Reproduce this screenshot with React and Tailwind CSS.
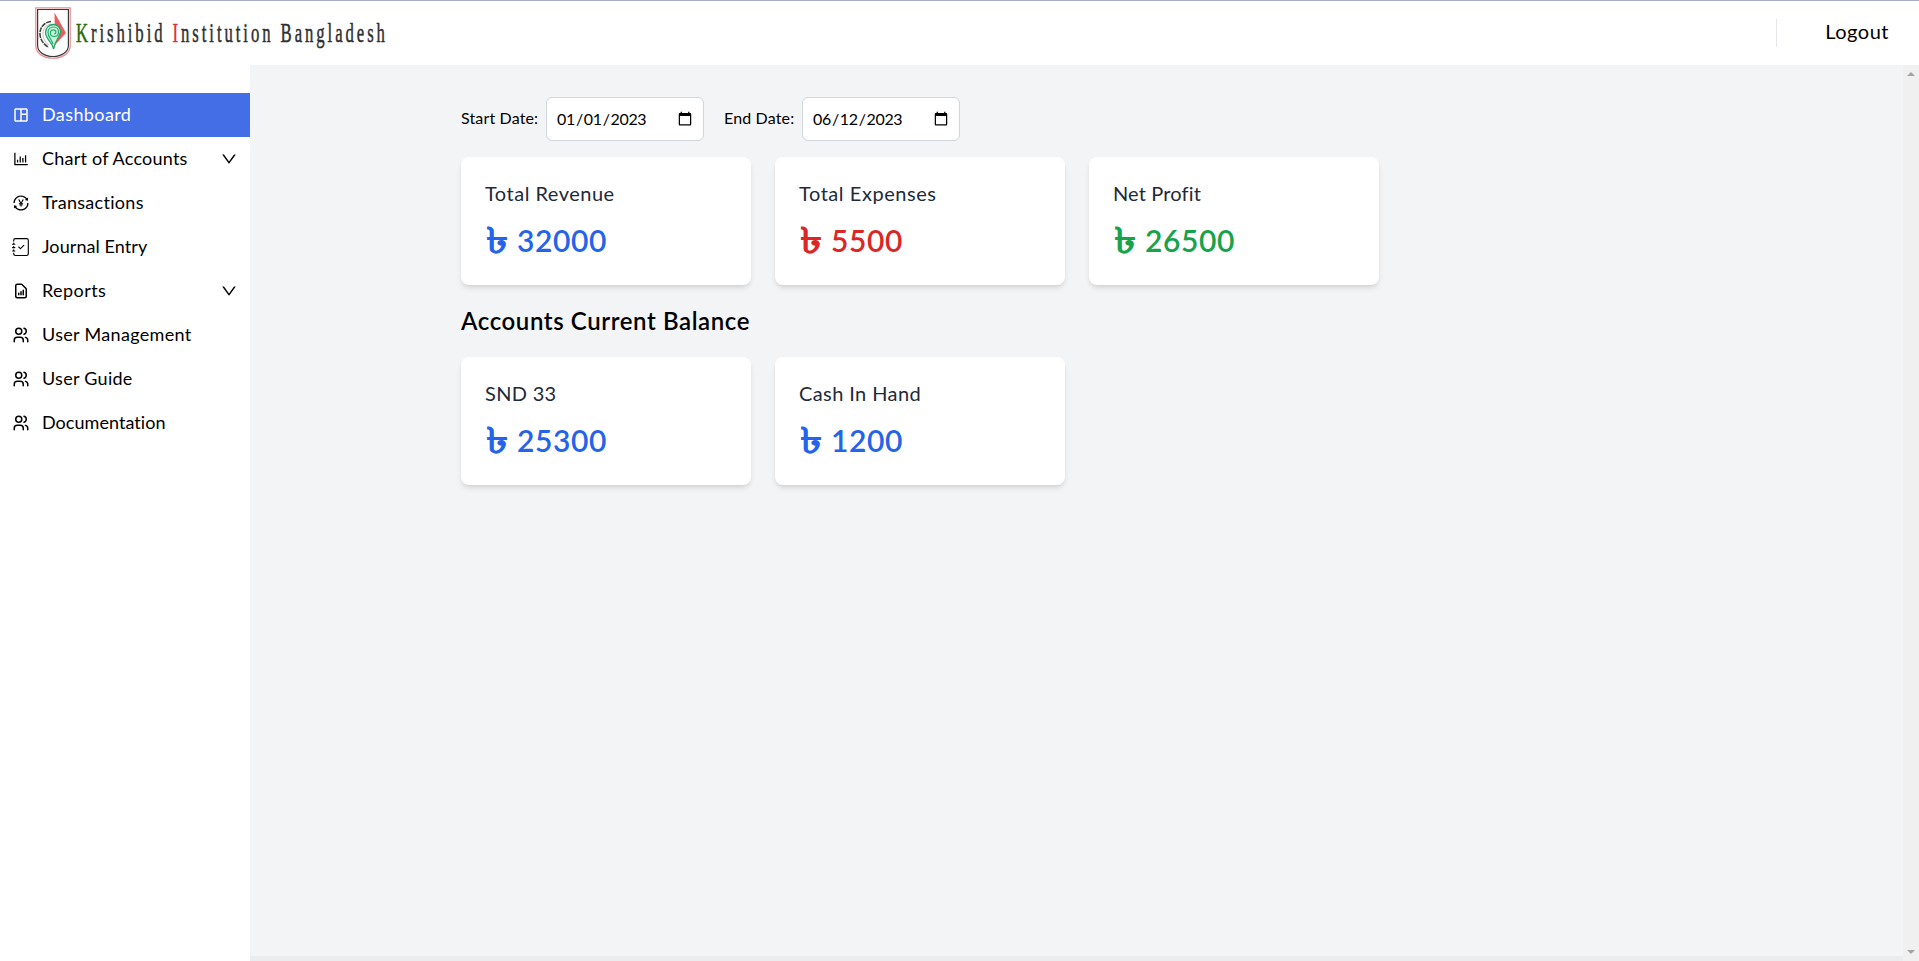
import React from "react";
import { MdOutlineSpaceDashboard } from "react-icons/md";
import { AiOutlineBarChart, AiOutlineTransaction, AiOutlineDown } from "react-icons/ai";
import { BsJournalCheck } from "react-icons/bs";
import { HiOutlineDocumentReport } from "react-icons/hi";
import { TbUsers } from "react-icons/tb";

const menu = [
  { label: "Dashboard", icon: MdOutlineSpaceDashboard, tracking: "tracking-[0.4px]", active: true },
  { label: "Chart of Accounts", icon: AiOutlineBarChart, tracking: "tracking-[0.22px]", expandable: true },
  { label: "Transactions", icon: AiOutlineTransaction, tracking: "tracking-[0.3px]" },
  { label: "Journal Entry", icon: BsJournalCheck, tracking: "tracking-[0.08px]" },
  { label: "Reports", icon: HiOutlineDocumentReport, tracking: "tracking-[0.42px]", expandable: true },
  { label: "User Management", icon: TbUsers, tracking: "tracking-[0.32px]" },
  { label: "User Guide", icon: TbUsers, tracking: "tracking-[0.28px]" },
  { label: "Documentation", icon: TbUsers, tracking: "tracking-[0.05px]" },
];

const totals = [
  { title: "Total Revenue", value: 32000, color: "text-[#2563eb]", tracking: "tracking-[0.5px]" },
  { title: "Total Expenses", value: 5500, color: "text-[#dc2626]", tracking: "tracking-[0.55px]" },
  { title: "Net Profit", value: 26500, color: "text-[#16a34a]", tracking: "tracking-[0.15px]" },
];

const balances = [
  { title: "SND 33", value: 25300, color: "text-[#2563eb]", tracking: "tracking-[0.3px]" },
  { title: "Cash In Hand", value: 1200, color: "text-[#2563eb]", tracking: "tracking-[0.4px]" },
];

function Crest() {
  return (
    <svg width="36" height="52" viewBox="0 0 36 52" fill="none" className="shrink-0">
      <path d="M.8.8h34.4v38c0 7-7 12.4-17.200 12.400S.8 45.800.8 38.800z" stroke="#ec8f92" strokeWidth="1.300" />
      <path d="M2.600 2.500h30.800v36c0 6-6.300 11-15.400 11s-15.400-5-15.400-11z" stroke="#3a3a3a" strokeWidth="1.200" />
      <path d="M19.500 5.500L31 26 20 38z" fill="#ee5a5f" />
      <path d="M16 14.500C9 15 4.500 21 5 27.500s4.500 10 8.500 13" stroke="#444" strokeWidth="1.600" strokeDasharray="5 .8" />
      <path d="M16 17C10 18 7.500 23 8 28s3 8 6 10" stroke="#999" strokeWidth=".6" />
      <path d="M18.500 42C18 36 10.500 32 10.500 25.500c0-5 4-8 8-8s7 3 7 7c0 5-5 8-7 17.500z" fill="#c9f0db" stroke="#22a565" strokeWidth="1.300" />
      <path d="M18 37c-1-4-5-7-5-11.500 0-3.500 2.500-5.500 5.500-5.500s5 2.200 5 5-2 4.500-4.500 4.500-3.600-1.600-3.600-3.500 1.400-3.200 3-3.200 2.500 1.200 2.500 2.400-.8 1.800-1.900 1.800" stroke="#22b06c" strokeWidth="1.200" />
    </svg>
  );
}

function Header() {
  return (
    <header className="flex h-[65px] shrink-0 items-center border-t border-[#a3adca] bg-white pl-[35px] pr-[30px]">
      <Crest />
      <div className="ml-[5px] w-[320px] overflow-visible">
        <span className="inline-block origin-left scale-x-[0.597] whitespace-nowrap font-['Liberation_Serif',serif] text-[28px] leading-8 tracking-[4.9px] text-[#2e2e2e] [-webkit-text-stroke:0.5px]">
          <span className="text-[#2c6a06]">K</span>rishibid <span className="text-[#dc2f36]">I</span>nstitution Bangladesh
        </span>
      </div>
      <div className="ml-auto flex items-center">
        <span className="h-7 w-px bg-gray-200" />
        <button className="ml-[48px] pb-[4px] text-xl leading-7 tracking-[0.5px]">Logout</button>
      </div>
    </header>
  );
}

function Sidebar() {
  return (
    <nav className="w-[250px] shrink-0 bg-white pt-[28px]">
      {menu.map(({ label, icon: Icon, tracking, active, expandable }) => (
        <a
          key={label}
          className={`flex h-11 items-center px-3 ${active ? "bg-[#436ee6] text-white" : "text-black"}`}
        >
          <Icon className="size-[18px] shrink-0" />
          <span className={`ml-3 pb-[2px] text-lg leading-7 ${tracking}`}>{label}</span>
          {expandable && <AiOutlineDown className="ml-auto size-[18px]" />}
        </a>
      ))}
    </nav>
  );
}

function DateField({ label, value, className }) {
  return (
    <label className={`flex items-center ${className}`}>
      <span className="pb-[3px] tracking-[0.15px]">{label}</span>
      <input
        type="date"
        defaultValue={value}
        className="ml-auto h-[44px] w-[158px] rounded-md border border-gray-300 bg-white pb-[9px] pl-[9px] pr-2 pt-2 text-base tracking-[-0.35px] text-black"
      />
    </label>
  );
}

function Card({ title, value, color, tracking }) {
  return (
    <div className="h-32 w-[290px] rounded-lg bg-white p-6 shadow-md">
      <h2 className={`-mt-[2px] mb-[11px] text-xl leading-7 text-gray-800 ${tracking}`}>{title}</h2>
      <p className={`flex h-[45px] items-center text-[30px] font-semibold ${color}`}>
        <span className="w-8 origin-left scale-x-125 pb-[4px] pl-px text-[36px] leading-none">৳</span>
        <span className="tracking-[0.6px]">{value}</span>
      </p>
    </div>
  );
}

function Scrollbar() {
  return (
    <div className="flex w-4 shrink-0 flex-col items-center justify-between bg-[#f0f0f0] py-[6px]">
      <svg width="8" height="5" viewBox="0 0 8 5" fill="#a3a3a3"><path d="M0 5L4 1l4 4z" /></svg>
      <svg width="8" height="5" viewBox="0 0 8 5" fill="#a3a3a3"><path d="M0 0l4 4 4-4z" /></svg>
    </div>
  );
}

export default function App() {
  return (
    <div className="flex h-screen flex-col overflow-hidden bg-white font-['Lato',sans-serif] text-black [font-variant-ligatures:none]">
      <Header />
      <div className="flex min-h-0 flex-1">
        <Sidebar />
        <main className="flex min-w-0 flex-1 flex-col bg-gray-100">
          <div className="flex-1 pl-[211px] pt-8">
            <div className="flex">
              <DateField label="Start Date:" value="2023-01-01" className="w-[243px]" />
              <DateField label="End Date:" value="2023-06-12" className="ml-5 w-[236px]" />
            </div>
            <div className="mt-4 flex gap-6">
              {totals.map((card) => <Card key={card.title} {...card} />)}
            </div>
            <h1 className="my-5 text-2xl font-semibold leading-8 tracking-[0.6px]">Accounts Current Balance</h1>
            <div className="flex gap-6">
              {balances.map((card) => <Card key={card.title} {...card} />)}
            </div>
          </div>
          <div className="h-[5px] bg-[#ebecee]" />
        </main>
        <Scrollbar />
      </div>
    </div>
  );
}
